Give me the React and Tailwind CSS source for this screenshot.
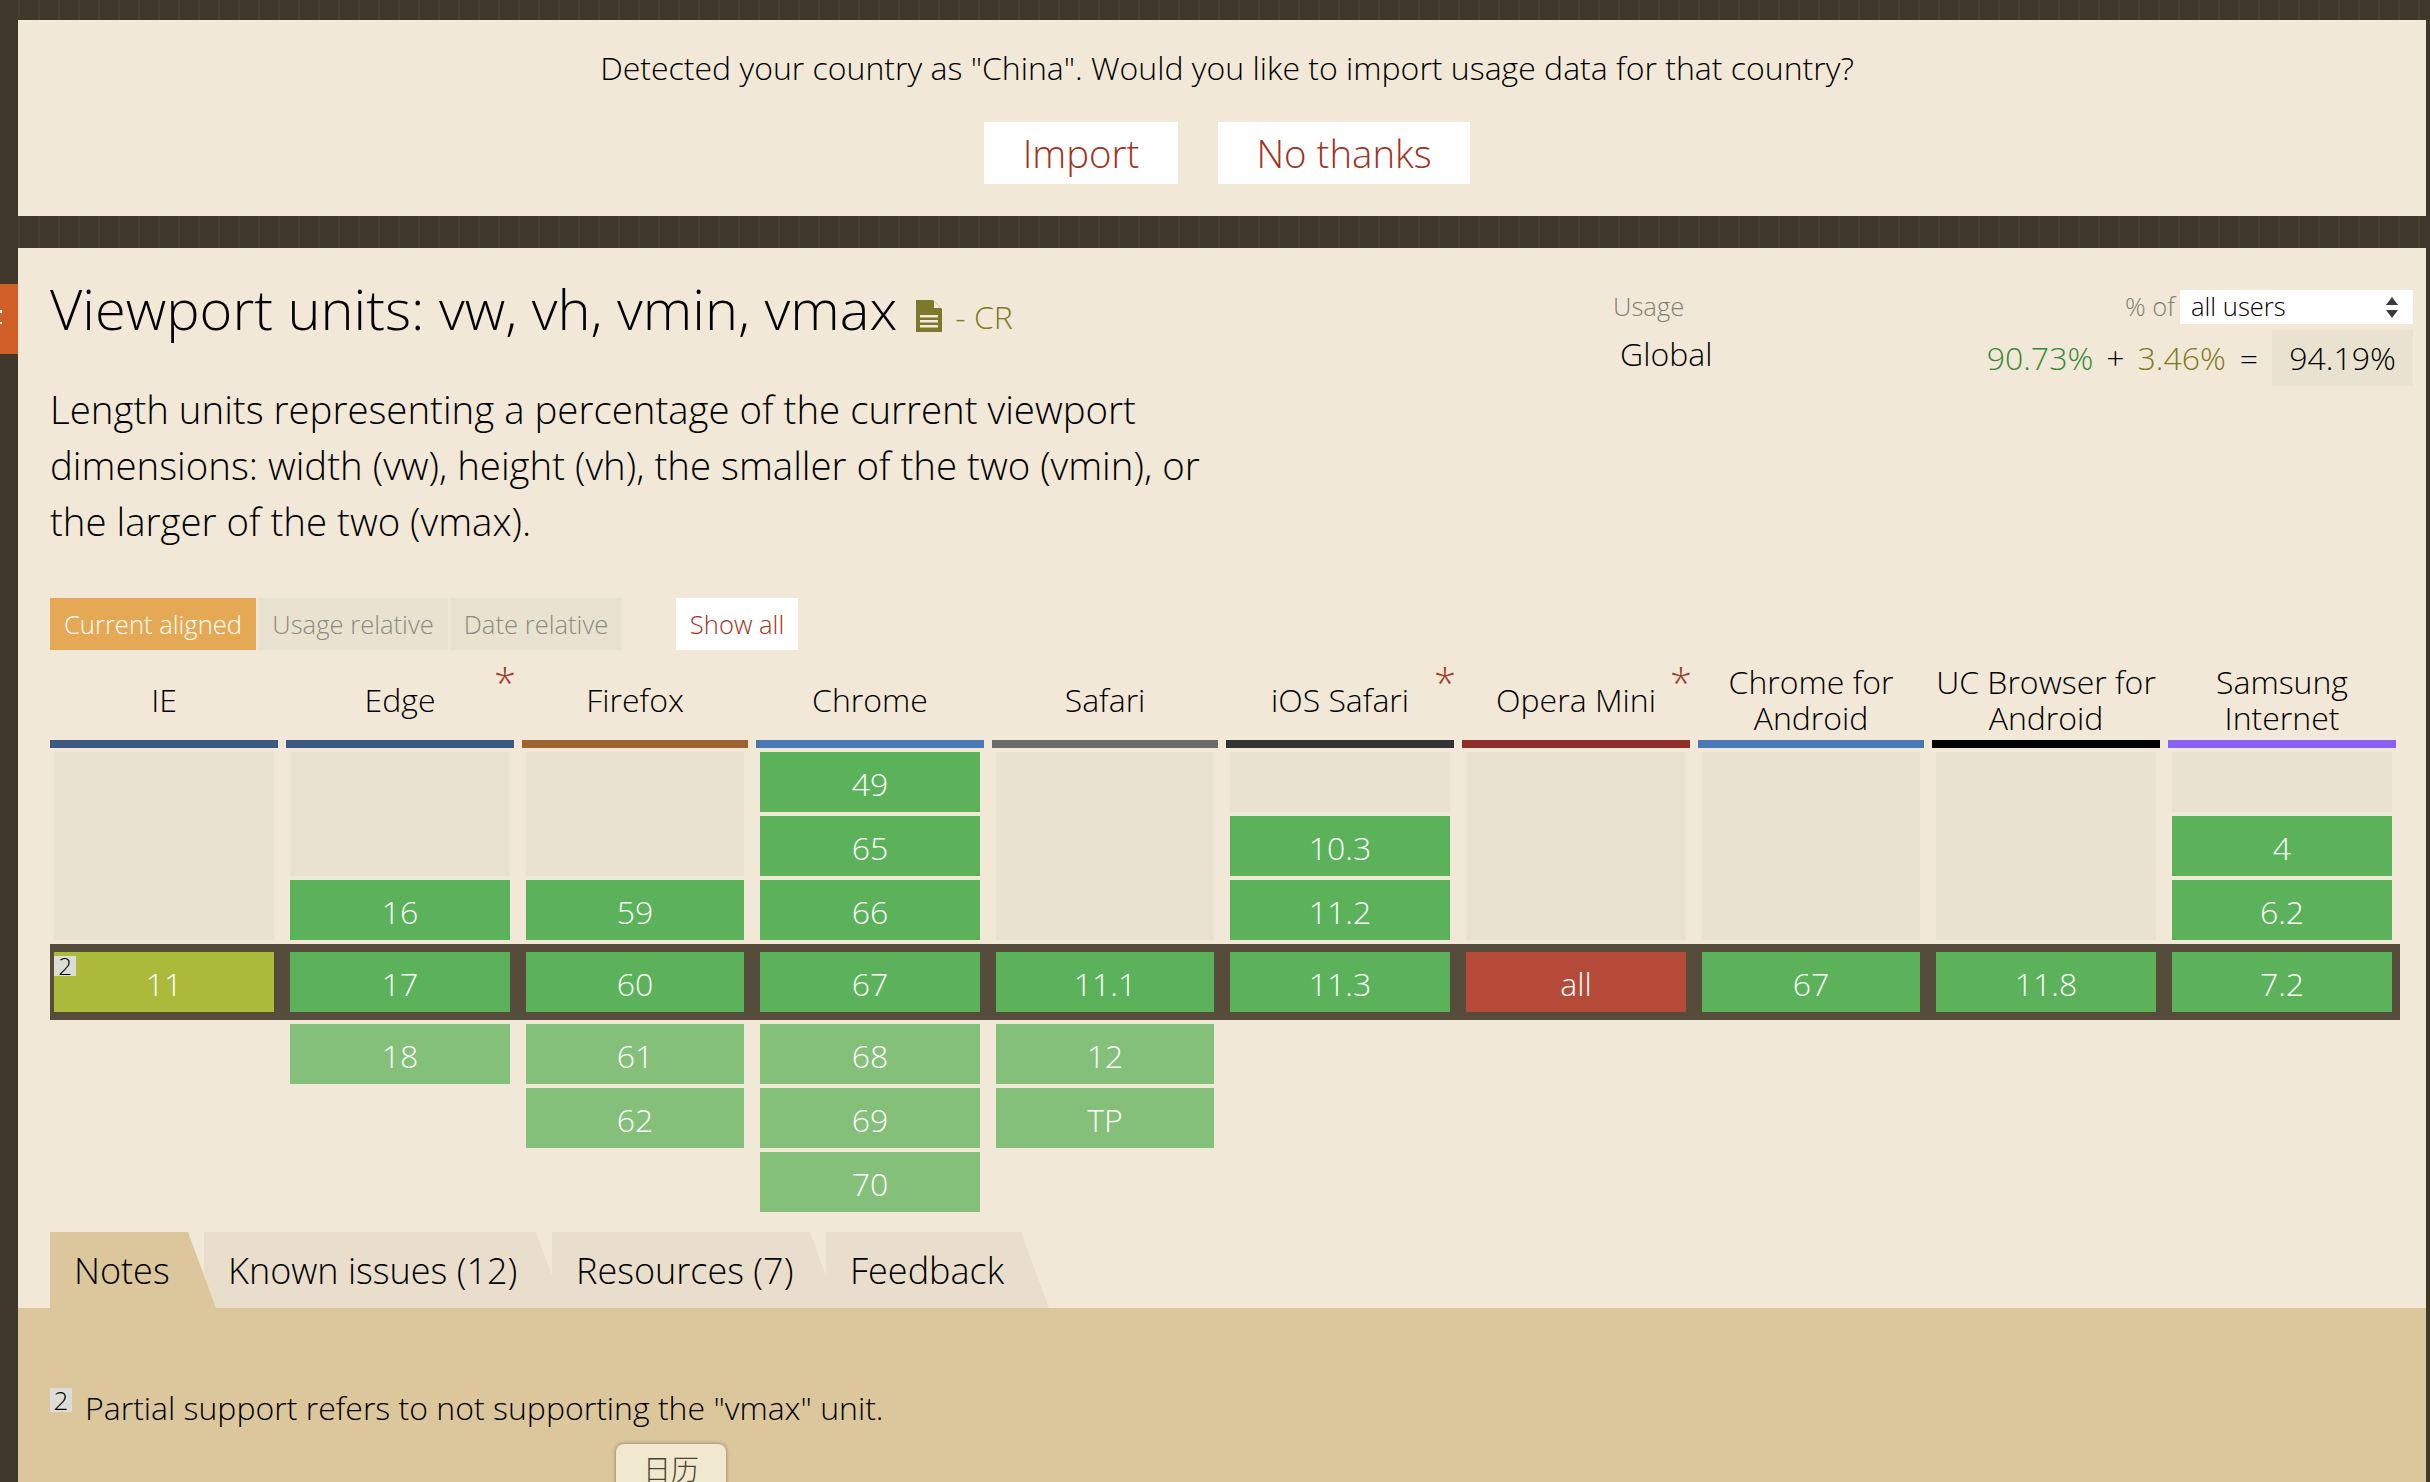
const GRID = "grid grid-cols-[228px_228px_226px_228px_226px_228px_228px_226px_228px_228px] gap-x-2";

const browsers = [
  { name: ["IE"], bar: "bg-[#3a5a82]", top: [{ span: 3 }], current: { v: "11", kind: "partial", note: "2" }, bottom: [{ span: 3, empty: true }] },
  { name: ["Edge"], star: true, bar: "bg-[#3a5a82]", top: [{ span: 2 }, { v: "16" }], current: { v: "17" }, bottom: [{ v: "18", kind: "future" }, { span: 2, empty: true }] },
  { name: ["Firefox"], bar: "bg-[#9e6331]", top: [{ span: 2 }, { v: "59" }], current: { v: "60" }, bottom: [{ v: "61", kind: "future" }, { v: "62", kind: "future" }, { empty: true }] },
  { name: ["Chrome"], bar: "bg-[#4a78b4]", top: [{ v: "49" }, { v: "65" }, { v: "66" }], current: { v: "67" }, bottom: [{ v: "68", kind: "future" }, { v: "69", kind: "future" }, { v: "70", kind: "future" }] },
  { name: ["Safari"], bar: "bg-[#6b6b6b]", top: [{ span: 3 }], current: { v: "11.1" }, bottom: [{ v: "12", kind: "future" }, { v: "TP", kind: "future" }, { empty: true }] },
  { name: ["iOS Safari"], star: true, bar: "bg-[#333333]", top: [{ span: 1 }, { v: "10.3" }, { v: "11.2" }], current: { v: "11.3" }, bottom: [{ span: 3, empty: true }] },
  { name: ["Opera Mini"], star: true, bar: "bg-[#8e2f2b]", top: [{ span: 3 }], current: { v: "all", kind: "no" }, bottom: [{ span: 3, empty: true }] },
  { name: ["Chrome for", "Android"], bar: "bg-[#4a78b4]", top: [{ span: 3 }], current: { v: "67" }, bottom: [{ span: 3, empty: true }] },
  { name: ["UC Browser for", "Android"], bar: "bg-black", top: [{ span: 3 }], current: { v: "11.8" }, bottom: [{ span: 3, empty: true }] },
  { name: ["Samsung", "Internet"], bar: "bg-[#8a61f5]", top: [{ span: 1 }, { v: "4" }, { v: "6.2" }], current: { v: "7.2" }, bottom: [{ span: 3, empty: true }] },
];

const kinds = {
  yes: "bg-[#5cb25a]",
  future: "bg-[#84c07a]",
  partial: "bg-[#abba3b]",
  no: "bg-[#b54a38]",
};
const spans = { 1: "row-span-1", 2: "row-span-2", 3: "row-span-3" };

const Cell = ({ cell }) => {
  if (cell.empty) return <div className={spans[cell.span || 1]} />;
  if (!cell.v) {
    return (
      <div className={`${spans[cell.span || 1]} px-1`}>
        <div className="h-full bg-[#e9e2cf]" />
      </div>
    );
  }
  return (
    <div className="px-1">
      <div className={`relative h-[60px] flex items-center justify-center pt-1 text-white text-[32px] ${kinds[cell.kind || "yes"]}`}>
        {cell.note && (
          <span className="absolute left-0 top-1 w-[22px] h-5 bg-[#dedcd6] text-black text-[24px] leading-5 text-center">
            {cell.note}
          </span>
        )}
        {cell.v}
      </div>
    </div>
  );
};

const Tab = ({ label, active, width, first }) => (
  <div
    className={`h-[76px] pl-6 text-[36px] leading-[78px] text-black [clip-path:polygon(0_0,calc(100%-28px)_0,100%_100%,0_100%)] ${width} ${
      active ? "bg-[#dcc79d] relative z-10" : "bg-[#e9decb]"
    } ${first ? "" : "-ml-3"}`}
  >
    {label}
  </div>
);

const DocIcon = () => (
  <svg viewBox="0 0 26 32" className="w-[26px] h-8 ml-[19px] mt-3">
    <path d="M0 0H17L26 9V32H0Z" fill="#7c7a2a" />
    <path d="M18 1L25 8H18Z" fill="#f2e8d7" />
    <path d="M4 15H22V17.5H4ZM4 20H22V22.5H4ZM4 25H22V27.5H4Z" fill="#f2e8d7" />
  </svg>
);

export default function App() {
  return (
    <div className="relative h-[1482px] overflow-hidden bg-[repeating-linear-gradient(90deg,#3f382a_0,#3f382a_18px,#464031_18px,#464031_20px)] pl-[18px] pr-1 pt-5 font-light text-black [font-family:'Open_Sans',sans-serif]">
      {/* side tab */}
      <div className="absolute left-0 top-[284px] w-[18px] h-[70px] bg-[#d05e27]">
        <div className="absolute left-0 top-[26px] w-[2px] h-[3px] bg-white" />
        <div className="absolute left-0 top-[38px] w-[2px] h-[2px] bg-white" />
      </div>

      {/* import prompt */}
      <div className="h-[196px] bg-[#f2e8d7] flex flex-col items-center pt-[26px]">
        <p className="ml-[10px] text-[32px] leading-[44px]">
          Detected your country as "China". Would you like to import usage data for that country?
        </p>
        <div className="flex gap-10 mt-[32px] ml-[10px]">
          <button className="w-[194px] h-[62px] pt-[2px] bg-white text-[#a33220] text-[38.4px] font-light">Import</button>
          <button className="w-[252px] h-[62px] pt-[2px] bg-white text-[#a33220] text-[38.4px] font-light">No thanks</button>
        </div>
      </div>

      {/* main panel */}
      <div className="mt-8 h-[1234px] bg-[#f2e8d7] flex flex-col">
        <div className="flex pl-8 pr-[13px]">
          <div className="w-[1563px] shrink-0">
            <div className="flex items-center mt-[26px] h-[72px]">
              <h1 className="text-[56px] font-light -mt-1">Viewport units: vw, vh, vmin, vmax</h1>
              <DocIcon />
              <span className="ml-[13px] mt-[14px] text-[32px] text-[#7f7a20]">- CR</span>
            </div>
            <p className="w-[1200px] mt-[35px] text-[38.4px] leading-[56px]">
              Length units representing a percentage of the current viewport dimensions: width (vw), height (vh), the smaller of the two (vmin), or the larger of the two (vmax).
            </p>
            <div className="flex h-[52px] mt-[49px] text-[25.6px] leading-[54px]">
              <div className="w-[206px] bg-[#e5a955] text-white text-center">Current aligned</div>
              <div className="w-[190px] ml-[2px] bg-[#e9e2cf] text-[#8b8b80] text-center">Usage relative</div>
              <div className="w-[172px] ml-[2px] bg-[#e9e2cf] text-[#8b8b80] text-center">Date relative</div>
              <div className="w-[122px] ml-[54px] bg-white text-[#a33220] text-center">Show all</div>
            </div>
          </div>
          <div className="flex-1 mt-[42px]">
            <div className="flex items-center h-[34px]">
              <span className="text-[25.6px] text-[#7f7f74]">Usage</span>
              <span className="ml-auto text-[25.6px] text-[#7f7f74]">% of</span>
              <div className="relative ml-[5px] w-[233px]">
                <select className="w-full h-[34px] pl-[11px] bg-white text-[25.6px] leading-[34px] appearance-none font-light">
                  <option>all users</option>
                </select>
                <svg viewBox="0 0 12 22" className="absolute right-[15px] top-[7px] w-3 h-[22px] text-[#3a3a3a]">
                  <path d="M6 0L12 8H0ZM0 13H12L6 21Z" fill="currentColor" />
                </svg>
              </div>
            </div>
            <div className="flex items-center mt-[6px] h-[56px]">
              <span className="ml-[7px] -mt-2 text-[32px]">Global</span>
              <span className="ml-auto text-[32px] text-[#358a38]">90.73%</span>
              <span className="ml-[13px] text-[32px]">+</span>
              <span className="ml-[13px] text-[32px] text-[#7f7a20]">3.46%</span>
              <span className="ml-[14px] text-[32px]">=</span>
              <span className="ml-[14px] w-[141px] h-[56px] bg-[#e9e2cf] text-[32px] leading-[56px] text-center">94.19%</span>
            </div>
          </div>
        </div>

        {/* support table */}
        <div className="ml-8 w-[2350px]">
          <div className={`${GRID} h-20 mt-[10px]`}>
            {browsers.map((b) => (
              <div key={b.name[0]} className="relative flex items-center justify-center text-center text-[32px] leading-[36px] whitespace-nowrap">
                <span>
                  {b.name[0]}
                  {b.name[1] && <br />}
                  {b.name[1]}
                </span>
                {b.star && <span className="absolute right-[-2px] top-[-1px] text-[#a33a2a] text-[40px] leading-[48px]">*</span>}
              </div>
            ))}
          </div>
          <div className={GRID}>
            {browsers.map((b) => (
              <div key={b.name[0]} className={`h-2 ${b.bar}`} />
            ))}
          </div>
          <div className={`${GRID} mt-1 grid-flow-col grid-rows-[60px_60px_60px] gap-y-1`}>
            {browsers.flatMap((b) => b.top.map((c, i) => <Cell key={b.name[0] + i} cell={c} />))}
          </div>
          <div className={`${GRID} mt-1 py-2 bg-[#564c3b]`}>
            {browsers.map((b) => (
              <Cell key={b.name[0]} cell={b.current} />
            ))}
          </div>
          <div className={`${GRID} mt-1 grid-flow-col grid-rows-[60px_60px_60px] gap-y-1`}>
            {browsers.flatMap((b) => b.bottom.map((c, i) => <Cell key={b.name[0] + i} cell={c} />))}
          </div>
        </div>

        {/* tabs */}
        <div className="flex pl-8 mt-5">
          <Tab label="Notes" active first width="w-[166px]" />
          <Tab label="Known issues (12)" width="w-[360px]" />
          <Tab label="Resources (7)" width="w-[286px]" />
          <Tab label="Feedback" width="w-[223px]" />
        </div>

        <div className="relative flex-1 bg-[#dcc79d] pl-8 pt-[78px]">
          <div className="flex items-start text-[32px] leading-[44px]">
            <span className="w-[22px] h-6 mt-[2px] bg-[#dedcd6] text-[26px] leading-6 text-center">2</span>
            <span className="ml-[13px]">Partial support refers to not supporting the "vmax" unit.</span>
          </div>
          <div className="absolute left-[598px] top-[136px] w-[110px] h-[60px] rounded-t-lg bg-[#f0e8cf] shadow-[0_0_4px_rgba(0,0,0,0.4)] text-center text-[#4a4530] text-[28px] leading-[48px] [font-family:'Noto_Sans_CJK_SC',sans-serif]">
            日历
          </div>
        </div>
      </div>
    </div>
  );
}
